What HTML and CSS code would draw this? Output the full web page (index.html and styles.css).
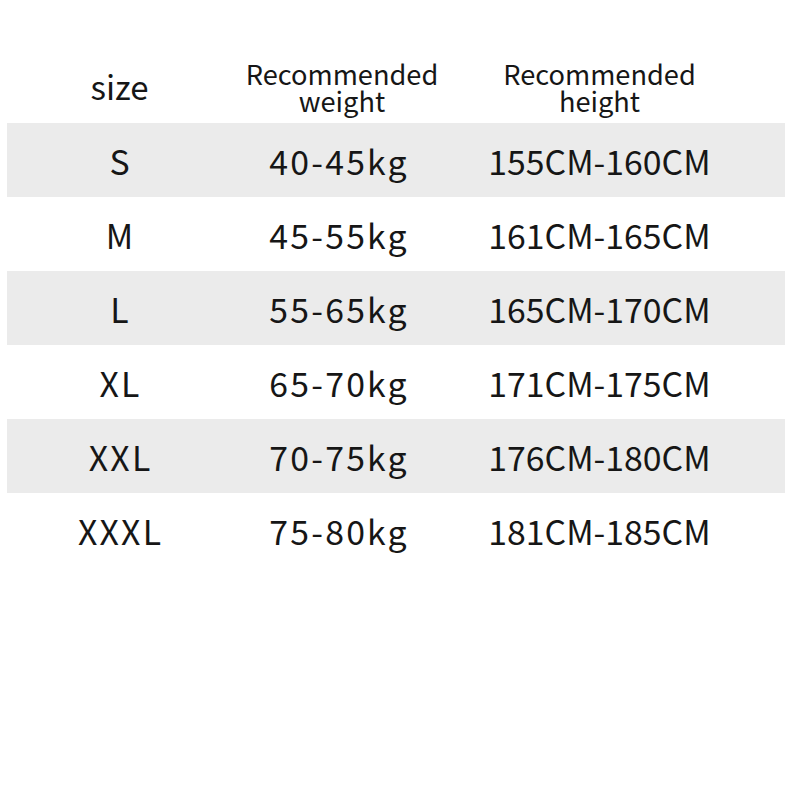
FILE: index.html
```html
<!DOCTYPE html>
<html>
<head>
<meta charset="utf-8">
<link rel="stylesheet" href="styles.css">
</head>
<body>
<div class="chart">
  <div class="row head">
    <div class="cell size-h">size</div>
    <div class="cell weight-h">Recommended<br>weight</div>
    <div class="cell">Recommended<br>height</div>
  </div>
  <div class="row shade"><div class="cell sp">S</div><div class="cell sp">40-45kg</div><div class="cell">155CM-160CM</div></div>
  <div class="row"><div class="cell sp">M</div><div class="cell sp">45-55kg</div><div class="cell">161CM-165CM</div></div>
  <div class="row shade"><div class="cell sp">L</div><div class="cell sp">55-65kg</div><div class="cell">165CM-170CM</div></div>
  <div class="row"><div class="cell sp">XL</div><div class="cell sp">65-70kg</div><div class="cell">171CM-175CM</div></div>
  <div class="row shade"><div class="cell sp">XXL</div><div class="cell sp">70-75kg</div><div class="cell">176CM-180CM</div></div>
  <div class="row"><div class="cell sp">XXXL</div><div class="cell sp">75-80kg</div><div class="cell">181CM-185CM</div></div>
</div>
</body>
</html>
```

FILE: styles.css
```css
html, body {
  margin: 0;
  padding: 0;
  background: #ffffff;
}
body {
  font-family: "Noto Sans CJK SC", "Noto Sans", sans-serif;
  color: #161616;
}
.chart {
  margin: 50px 15px 0 7px;
  display: flex;
  flex-direction: column;
}
.row {
  display: grid;
  grid-template-columns: 225px 212px 311px 1fr;
  height: 74px;
  align-items: center;
  font-size: 33.8px;
  font-weight: 400;
}
.row.shade {
  background: #ebebeb;
}
.head {
  height: 73px;
  font-size: 27.2px;
  line-height: 27px;
}
.head .size-h {
  font-size: 33px;
}
.head .weight-h {
  padding-left: 8px;
}
.cell {
  text-align: center;
  white-space: nowrap;
}
.cell.sp {
  letter-spacing: 2.2px;
  text-indent: 2.2px;
}
```
